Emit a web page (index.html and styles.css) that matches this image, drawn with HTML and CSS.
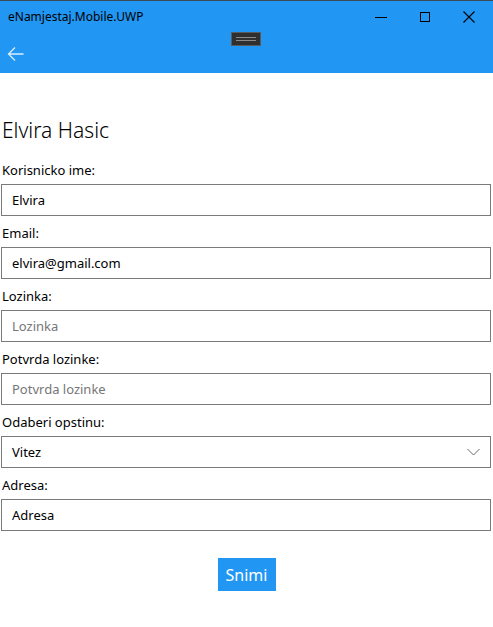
FILE: index.html
```html
<!DOCTYPE html>
<html>
<head>
<meta charset="utf-8">
<link rel="stylesheet" href="styles.css">
</head>
<body>
<header class="appbar">
  <div class="titlebar">
    <span class="app-title">eNamjestaj.Mobile.UWP</span>
    <div class="win-controls">
      <span class="wc"><svg width="14" height="14" viewBox="0 0 14 14"><path d="M1 7.5h12" stroke="#000" stroke-width="1"/></svg></span>
      <span class="wc"><svg width="14" height="14" viewBox="0 0 14 14"><rect x="2.5" y="2.5" width="9" height="9" fill="none" stroke="#000" stroke-width="1"/></svg></span>
      <span class="wc"><svg width="14" height="14" viewBox="0 0 14 14"><path d="M1.5 1.5l11 11M12.5 1.5l-11 11" stroke="#000" stroke-width="1.1"/></svg></span>
    </div>
  </div>
  <div class="grip-row"><div class="grip"><span class="grip-line"></span><span class="grip-line"></span></div></div>
  <div class="navrow">
    <svg class="back" width="18" height="16" viewBox="0 0 18 16"><path d="M16.5 8H1.5M8 1.5L1.5 8L8 14.5" fill="none" stroke="#dbeeff" stroke-width="1.3"/></svg>
  </div>
</header>
<main class="content">
  <h1 class="name">Elvira Hasic</h1>
  <label class="lbl">Korisnicko ime:</label>
  <div class="field">Elvira</div>
  <label class="lbl">Email:</label>
  <div class="field">elvira@gmail.com</div>
  <label class="lbl">Lozinka:</label>
  <div class="field placeholder">Lozinka</div>
  <label class="lbl">Potvrda lozinke:</label>
  <div class="field placeholder">Potvrda lozinke</div>
  <label class="lbl">Odaberi opstinu:</label>
  <div class="field select"><span>Vitez</span><svg width="13" height="8" viewBox="0 0 13 8"><path d="M0.5 1l6 6 6-6" fill="none" stroke="#6b6b6b" stroke-width="1"/></svg></div>
  <label class="lbl">Adresa:</label>
  <div class="field">Adresa</div>
  <div class="actions"><button class="btn">Snimi</button></div>
</main>
</body>
</html>
```
FILE: styles.css
```css
* { box-sizing: border-box; }
html, body { margin: 0; padding: 0; background: #fff; }
body {
  width: 493px;
  height: 627px;
  font-family: "Segoe UI", "Noto Sans", "Open Sans", sans-serif;
  color: #000;
  overflow: hidden;
}
.appbar {
  background: #2196f3;
  height: 73px;
  border-top: 1px solid #3c4a55;
  display: flex;
  flex-direction: column;
}
.titlebar {
  height: 31px;
  display: flex;
  align-items: center;
  justify-content: space-between;
}
.app-title {
  font-size: 12px;
  padding-left: 8px;
  padding-bottom: 1px;
  color: #000;
}
.win-controls { display: flex; height: 31px; padding-right: 2px; }
.wc {
  width: 44px;
  display: flex;
  align-items: center;
  justify-content: center;
}
.grip-row {
  display: flex;
  justify-content: center;
  height: 15px;
}
.grip {
  width: 30px;
  height: 14px;
  background: #2f2f2f;
  border: 1px solid #5a5a5a;
  display: flex;
  flex-direction: column;
  justify-content: center;
  align-items: center;
  gap: 2px;
  margin-left: -1px;
}
.grip-line {
  width: 20px;
  height: 1px;
  background: #8a8a8a;
}
.navrow {
  flex: 1;
  display: flex;
  align-items: center;
  padding-left: 7px;
  padding-bottom: 16px;
}
.content {
  padding: 43px 2px 0 1px;
  display: flex;
  flex-direction: column;
}
.name {
  margin: 0 0 9px 1px;
  font-size: 21px;
  font-weight: 300;
  line-height: 28px;
}
.lbl {
  font-size: 13px;
  line-height: 20px;
  padding: 7px 0 4px 1px;
}
.field {
  height: 32px;
  border: 1px solid #7a7a7a;
  font-size: 13px;
  padding: 0 10px;
  display: flex;
  align-items: center;
}
.placeholder { color: #767676; }
.select { justify-content: space-between; }
.actions {
  display: flex;
  justify-content: center;
  margin-top: 27px;
  padding-left: 1px;
}
.btn {
  background: #2196f3;
  color: #fff;
  border: none;
  font-family: inherit;
  font-size: 16px;
  height: 33px;
  width: 58px;
  padding: 0;
}
```
